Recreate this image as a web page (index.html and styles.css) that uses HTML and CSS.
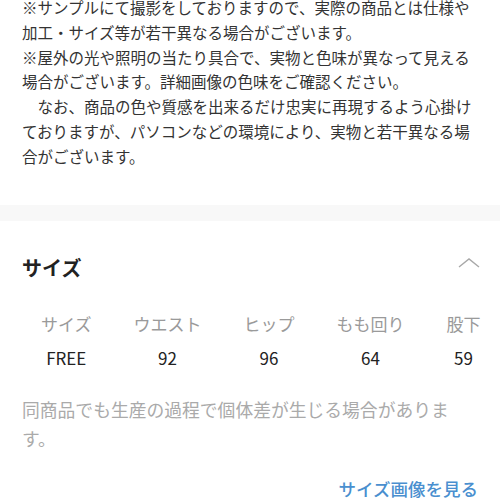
FILE: index.html
```html
<!DOCTYPE html>
<html lang="ja">
<head>
<meta charset="utf-8">
<link rel="stylesheet" href="styles.css">
</head>
<body>
<div class="page">
  <section class="desc">
    <p>※サンプルにて撮影をしておりますので、実際の商品とは仕様や加工・サイズ等が若干異なる場合がございます。</p>
    <p>※屋外の光や照明の当たり具合で、実物と色味が異なって見える場合がございます。詳細画像の色味をご確認ください。</p>
    <p>　なお、商品の色や質感を出来るだけ忠実に再現するよう心掛けておりますが、パソコンなどの環境により、実物と若干異なる場合がございます。</p>
  </section>
  <div class="band"></div>
  <section class="size">
    <div class="size-head">
      <h2 class="size-title">サイズ</h2>
      <svg class="chevron" width="22" height="10" viewBox="0 0 22 10"><polyline points="1,9 11,1 21,9" fill="none" stroke="#a8a8a8" stroke-width="1.4"/></svg>
    </div>
    <table class="size-table">
      <tr class="th-row"><th>サイズ</th><th>ウエスト</th><th>ヒップ</th><th>もも回り</th><th>股下</th></tr>
      <tr class="td-row"><td>FREE</td><td>92</td><td>96</td><td>64</td><td>59</td></tr>
    </table>
    <p class="note">同商品でも生産の過程で個体差が生じる場合があります。</p>
    <div class="link-row"><a class="size-link">サイズ画像を見る</a></div>
  </section>
</div>
</body>
</html>
```

FILE: styles.css
```css
html, body {
  margin: 0;
  padding: 0;
  background: #ffffff;
  overflow: hidden;
}
.page {
  width: 500px;
  height: 500px;
  font-family: "Noto Sans CJK JP", "Liberation Sans", sans-serif;
  overflow: hidden;
}
.desc {
  margin-top: -5px;
  padding: 0 22px 0 22px;
  font-size: 15.5px;
  line-height: 24.8px;
  color: #333333;
}
.desc p {
  margin: 0;
}
.band {
  margin-top: 36px;
  height: 16px;
  background: #f8f8f8;
}
.size {
  padding: 0 22px 0 22px;
}
.size-head {
  display: flex;
  justify-content: space-between;
  align-items: center;
  margin-top: 32px;
  height: 30px;
}
.size-title {
  margin: 0;
  font-size: 20px;
  font-weight: 700;
  color: #222222;
  line-height: 30px;
}
.chevron {
  margin-right: -2px;
  margin-top: -10px;
}
.size-table {
  border-collapse: collapse;
  margin-top: 25px;
  margin-left: -2px;
  font-size: 17px;
  white-space: nowrap;
}
.size-table th, .size-table td {
  padding: 0 21px;
  text-align: center;
  font-weight: 400;
}
.th-row th {
  color: #9a9a9a;
  height: 32px;
}
.td-row td {
  color: #222222;
  height: 36px;
}
.note {
  margin: 19px 0 0 0;
  width: 440px;
  font-size: 17.8px;
  line-height: 29.5px;
  color: #aaaaaa;
}
.link-row {
  display: flex;
  justify-content: flex-end;
  margin-top: 23px;
}
.size-link {
  font-size: 17.5px;
  color: #4a8fcf;
  font-weight: 500;
  line-height: 24px;
}
```
